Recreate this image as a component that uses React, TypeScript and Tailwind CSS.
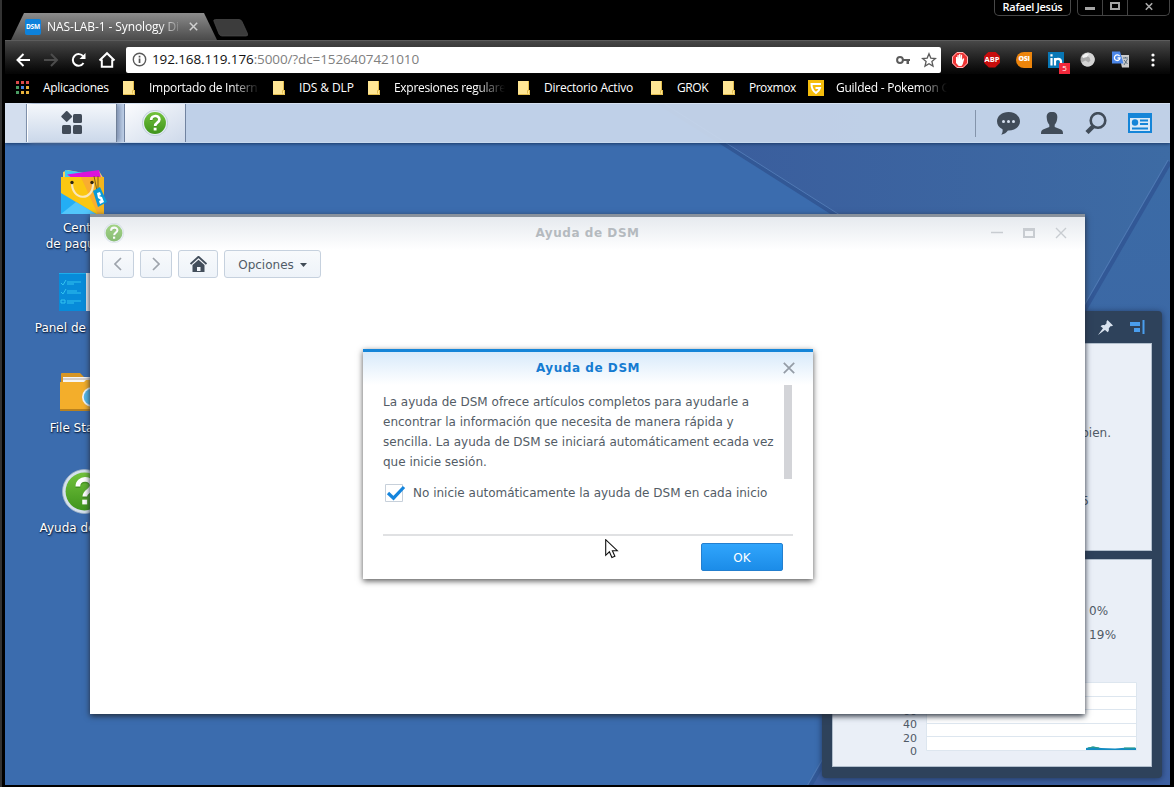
import React from 'react';

const dsm = "font-['DejaVu_Sans',sans-serif]";
const chrome = "font-['Open_Sans','Noto_Sans',sans-serif]";

function HelpBadge({ size, ring = '#e4ecf4', faded = false }: { size: number; ring?: string; faded?: boolean }) {
  const id = `help-${size}`;
  return (
    <svg width={size} height={size} viewBox="0 0 44 44" opacity={faded ? 0.6 : 1} className="block shrink-0">
      <defs>
        <linearGradient id={id} x1="0" y1="0" x2="0" y2="1">
          <stop offset="0" stopColor="#72c23c" />
          <stop offset="1" stopColor="#3f941c" />
        </linearGradient>
      </defs>
      <circle cx="22" cy="22" r="21.5" fill={ring} stroke="#9fb2c4" strokeWidth="0.8" />
      <circle cx="22" cy="22" r="18.5" fill={`url(#${id})`} />
      <path d="M15.500 17.500c0-9 14-9 14-.8 0 5.300-7.200 5-7.200 10.800" fill="none" stroke="#2f7615" strokeWidth="4.600" opacity="0.5" transform="translate(0 1)" />
      <path d="M15.500 17c0-9 14-9 14-.8 0 5.300-7.200 5-7.200 10.800" fill="none" stroke="#fff" strokeWidth="4.600" />
      <rect x="19.800" y="30" width="4.800" height="4.600" fill="#fff" />
    </svg>
  );
}

function Folder() {
  return (
    <svg width="12" height="14" viewBox="0 0 12 14" className="shrink-0">
      <path d="M0 0h11v9h1v5H0z" fill="#ffe694" />
      <path d="M10.500 0v9.500h-1v3M11.500 9v4.500H0" fill="none" stroke="#e3bd4d" strokeWidth="1" />
    </svg>
  );
}

type BM = { label: string; box: string; text: string; fade?: boolean; g?: boolean };
const bookmarks: BM[] = [
  { label: 'Importado de Intern', box: 'w-[150px]', text: 'w-[118px] tracking-[-0.28px]', fade: true },
  { label: 'IDS & DLP', box: 'w-[95px]', text: 'w-[66px] tracking-[-0.1px]' },
  { label: 'Expresiones regulare', box: 'w-[150px]', text: 'w-[118px] tracking-[-0.3px]', fade: true },
  { label: 'Directorio Activo', box: 'w-[133px]', text: 'w-[100px] tracking-[-0.22px]' },
  { label: 'GROK', box: 'w-[72px]', text: 'w-[42px] tracking-[-0.4px]' },
  { label: 'Proxmox', box: 'w-[85px]', text: 'w-[56px] tracking-[-0.5px]' },
  { label: 'Guilded - Pokemon G', box: 'w-[160px]', text: 'w-[130px] tracking-[-0.25px]', fade: true, g: true },
];

function Browser() {
  return (
    <header className={`${chrome} flex h-[103px] flex-col bg-black text-white`}>
      <div className="flex h-[40px] items-end justify-between">
        <div className="flex items-end">
          <div className="ml-[7px] flex h-[27px] w-[206px] items-center bg-linear-to-b from-[#8c8c8c] to-[#4b4b4b] [clip-path:polygon(13px_0,193px_0,206px_27px,0_27px)]">
            <div className="ml-[14px] flex size-4 items-center justify-center rounded-[2px] bg-[#0d82dc] text-[6.5px] font-bold tracking-[-0.1px]">DSM</div>
            <div className="ml-[6px] w-[138px] overflow-hidden text-[12px] tracking-[-0.1px] whitespace-nowrap [mask-image:linear-gradient(to_right,black_112px,transparent_136px)]">NAS-LAB-1 - Synology Di</div>
            <svg width="9" height="9" viewBox="0 0 9 9" className="ml-[4px]"><path d="M.8.800l7.400 7.400M8.200.800L.8 8.200" stroke="#d0d0d0" strokeWidth="1.500" /></svg>
          </div>
          <svg width="36" height="18" viewBox="0 0 36 18" className="mb-[3px] ml-[-4px]"><path d="M1 2.500Q0 .5 2.500.500H26q2 0 3 2l5.500 12q.8 2.500-1.500 2.500H9q-2 0-3-2z" fill="#3c3c3c" stroke="#4a4a4a" strokeWidth=".7" /></svg>
        </div>
        <div className="mr-[4px] flex gap-[6px] self-start">
          <div className="flex h-[16px] w-[77px] items-center justify-center rounded-b-[5px] border border-t-0 border-[#484848] pb-px text-[11px] font-semibold tracking-[-0.3px] whitespace-nowrap">Rafael Jesús</div>
          <div className="flex h-[16px] w-[93px] rounded-b-[5px] border border-t-0 border-[#444] text-[#bbb]">
            <div className="flex w-[25px] items-end justify-center border-r border-[#444] pb-[5px]"><div className="h-[3px] w-[10px] bg-[#a5a5a5]" /></div>
            <div className="flex w-[25px] justify-center border-r border-[#444] pt-[2px]"><div className="h-[8px] w-[10px] border-2 border-[#a5a5a5]" /></div>
            <div className="flex flex-1 justify-center pt-[2px]"><svg width="8" height="9" viewBox="0 0 10 9"><path d="M1 .5l8 8M9 .5l-8 8" stroke="#aaa" strokeWidth="2" /></svg></div>
          </div>
        </div>
      </div>
      <div className="mr-[4px] ml-px flex h-[34px] items-center border-t border-[#5c5c5c] bg-linear-to-b from-[#484848] to-[#050505] pt-[4px] pl-[10px]">
        <svg width="106" height="18" viewBox="0 0 106 18" fill="none" stroke="#fff" strokeWidth="2" className="mr-[5px] shrink-0">
          <path d="M15 9H2.500M8.500 3L2.500 9l6 6" />
          <path d="M29 9h12.500M36 3l6 6-6 6" stroke="#4c4c4c" />
          <path d="M68.500 12a5.800 5.800 0 1 1-.2-6.500" />
          <path d="M70.500 2v6h-6z" fill="#fff" stroke="none" />
          <path d="M84.500 9.500L92 2.200l7.500 7.300M86.800 8.500v7.200h10.400V8.500" />
        </svg>
        <div className="flex h-[26px] w-[815px] shrink-0 items-center rounded-[2px] bg-white pl-[6px] text-[#808080]">
          <svg width="15" height="15" viewBox="0 0 15 15" className="mr-[5px]"><circle cx="7.500" cy="7.500" r="6.200" fill="none" stroke="#5a5a5a" strokeWidth="1.400" /><path d="M6.700 6.500h1.700V11H6.700zM6.700 3.800h1.700v1.600H6.700z" fill="#555" /></svg>
          <div className="w-[738px] pb-px text-[13.5px] tracking-[-0.11px]"><span className="text-[#111]">192.168.119.176</span>:5000/?dc=1526407421010</div>
          <svg width="14" height="10" viewBox="0 0 14 10" className="mr-[11px] ml-[6px]"><circle cx="4" cy="5" r="2.900" fill="none" stroke="#5b5b5b" strokeWidth="2" /><path d="M7 4h7v2h-1v3h-2.500V6H7z" fill="#5b5b5b" /></svg>
          <svg width="16" height="16" viewBox="0 0 16 16"><path d="M8 1.800l1.800 4.300 4.600.4-3.500 3 1.100 4.600L8 11.700l-4 2.400 1.100-4.600-3.500-3 4.600-.4z" fill="none" stroke="#5b5b5b" strokeWidth="1.300" /></svg>
        </div>
        <div className="flex items-center">
          <svg width="16" height="16" viewBox="0 0 16 16" className="ml-[11px]"><path d="M4.800 0h6.400L16 4.800v6.400L11.200 16H4.800L0 11.200V4.800z" fill="#e33" /><path d="M5 .5h6l4.500 4.500v6L11 15.500H5L.5 11V5z" fill="none" stroke="#fbb" /><path d="M4 8V5h1.200v2.200L5.500 3h1.200v4L7.200 2h1.200v5l.6-4.300h1.100V8l1-1.800 1.200.5-1.600 5.500L9.500 14H6.700L4 11z" fill="#fff" /></svg>
          <div className="ml-[16px] flex size-4 items-center justify-center bg-[#c70d0d] text-[7.5px] font-bold [clip-path:polygon(30%_0,70%_0,100%_30%,100%_70%,70%_100%,30%_100%,0_70%,0_30%)]">ABP</div>
          <div className="ml-[16px] flex size-4 items-center justify-center rounded-l-full rounded-tr-[5px] rounded-br-[2px] bg-[#ed850b] text-[7px] font-extrabold tracking-[-0.3px]">OSI</div>
          <div className="relative ml-[16px] size-4 bg-[#0877b5]">
            <svg width="16" height="16" viewBox="0 0 16 16" fill="none" stroke="#fff" strokeWidth="2.200"><path d="M3.500 6v7.500M3.500 2.200v2.300M7 6v7.500M7 9q.5-2.200 3-2.200 3 0 3 3v3.700" /></svg>
            <div className="absolute top-[11px] left-[11px] flex h-[11px] w-[11px] items-center justify-center bg-[#f1283b] text-[8px] font-normal">5</div>
          </div>
          <svg width="15" height="15" viewBox="0 0 15 15" className="ml-[16px]"><circle cx="7.500" cy="7.500" r="7" fill="#aaa" /><path d="M7.500.500a7 7 0 1 1-6 10l4-2 3 2 2-2-1-3-3-2z" fill="#d4d4d4" /><path d="M2 4l4-3 3 1-2 3-4 1z" fill="#f2f2f2" /></svg>
          <svg width="17" height="17" viewBox="0 0 17 17" className="ml-[17px]"><path d="M7 4h10v12.500H10z" fill="#ccc" /><path d="M11 7h5M13.500 6v1M12 14l3.500-6M12 9l3.500 4" stroke="#5c7080" /><path d="M0 .5h8l3.500 12H0z" fill="#4b86e8" /><path d="M7.600 5.200A2.800 2.800 0 1 0 8 7H5.500" fill="none" stroke="#fff" strokeWidth="1.300" /></svg>
          <svg width="4" height="14" viewBox="0 0 4 14" fill="#fff" className="ml-[22px]"><circle cx="2" cy="2" r="1.600" /><circle cx="2" cy="7" r="1.600" /><circle cx="2" cy="12" r="1.600" /></svg>
        </div>
      </div>
      <nav className="flex h-[29px] items-center pb-px pl-[12px] text-[12px] whitespace-nowrap">
        <svg width="14" height="14" viewBox="0 0 14 14"><path d="M0 0h3v3H0zM5 0h3v3H5zM10 0h3v3h-3z" fill="#db4a4a" /><path d="M0 5h3v3H0zM0 10h3v3H0z" fill="#4a9d63" /><path d="M5 5h3v3H5z" fill="#4a82e0" /><path d="M10 5h3v3h-3zM5 10h3v3H5zM10 10h3v3h-3z" fill="#e8b23c" /></svg>
        <div className="ml-[13px] w-[80px] tracking-[-0.3px]">Aplicaciones</div>
        {bookmarks.map((b) => (
          <div key={b.label} className={`flex shrink-0 items-center ${b.box}`}>
            {b.g ? (
              <svg width="16" height="16" viewBox="0 0 16 16" className="mr-[12px] shrink-0"><path d="M0 0h16v16H0z" fill="#f5bd0c" /><path d="M13 4H3.500c0 5 1.500 7 4.500 9 2.500-1.600 3.500-3 4-5H7.500" fill="none" stroke="#fff" strokeWidth="2" /></svg>
            ) : (
              <div className="mr-[14px] shrink-0"><Folder /></div>
            )}
            <div className={`shrink-0 ${b.text} ${b.fade ? '[mask-image:linear-gradient(to_right,black_82px,transparent_111px)]' : ''}`}>{b.label}</div>
          </div>
        ))}
      </nav>
    </header>
  );
}

function Wallpaper() {
  return (
    <svg width="1165" height="683" viewBox="5 103 1165 683" className="absolute inset-0">
      <defs>
        <linearGradient id="wa" x1="0" y1="0" x2="1" y2="0"><stop offset="0" stopColor="#3a5c9c" /><stop offset="1" stopColor="#3d6ba4" /></linearGradient>
        <linearGradient id="wb" x1="0" y1="0" x2="0" y2="1"><stop offset="0" stopColor="#3b6ba6" /><stop offset="1" stopColor="#3d60a1" /></linearGradient>
      </defs>
      <path d="M5 103h1165v683H5z" fill="#3b6cae" />
      <path d="M661 103h509v58L1085 308 837 214z" fill="url(#wa)" />
      <path d="M1170 160L809 786h361z" fill="url(#wb)" />
      <path d="M659 103L839 217M1170 162L809 788" stroke="#325896" strokeWidth="4" />
      <path d="M663 103L843 217M1168 160L807 786" stroke="#5079b4" strokeWidth="1" />
    </svg>
  );
}

function Taskbar() {
  return (
    <div className="relative flex h-[40px] border-y border-t-[#d4e0f0] border-b-[#c9daee] bg-[#cbd9ed]/92 shadow-[0_1px_3px_#1c3a68]">
      <div className="w-[22px] border-r border-[#7f91aa] bg-[#d3deee]" />
      <div className="flex w-[90px] items-center justify-center border-r border-l border-r-[#6f7f97] border-l-white bg-linear-to-b from-[#f4f7fb] to-[#cbd8ea] pr-[2px] shadow-[3px_0_5px_#7d8fae]">
        <svg width="24" height="24" viewBox="0 0 24 24" fill="#414b58"><rect x="3" y="1" width="8.200" height="8.200" rx="1" transform="rotate(45 7 6)" /><rect x="14" y="3" width="9" height="9" rx="1.500" /><rect x="3" y="14" width="9" height="9" rx="1.500" /><rect x="14" y="14" width="9" height="9" rx="1.500" /></svg>
      </div>
      <div className="ml-[7px] flex w-[62px] items-center justify-center border-r border-l border-[#7183a0] bg-linear-to-br from-[#fbfcfe] to-[#ced9ea]"><HelpBadge size={26} /></div>
      <div className="ml-auto flex items-center pr-[18px]">
        <div className="mr-[21px] h-[27px] w-px bg-[#8494ab]" />
        <svg width="23" height="23" viewBox="0 0 23 23"><path d="M11.500 0C5 0 0 4.100 0 9.300c0 3.500 2 6.400 5.500 8 .4 2-.2 4-1.200 5.500 3.300-.5 5-2.300 6.600-4.200C17.700 18.900 23 14.900 23 9.300 23 4.100 18 0 11.500 0z" fill="#414c59" /><circle cx="6.500" cy="9.500" r="1.500" fill="#d6e0ef" /><circle cx="11.500" cy="9.500" r="1.500" fill="#d6e0ef" /><circle cx="16.500" cy="9.500" r="1.500" fill="#d6e0ef" /></svg>
        <svg width="22" height="22" viewBox="0 0 22 22" className="ml-[21px]"><path d="M11 0c4 0 5.500 2 5.300 5.500-.2 3.500-1.300 6-2.600 7.300v2.200l6.300 2.600c1.500.7 2 2 2 4.400H0c0-2.400.5-3.700 2-4.400L8.300 15v-2.200C7 11.500 5.900 9 5.700 5.500 5.500 2 7 0 11 0z" fill="#414c59" /></svg>
        <svg width="22" height="22" viewBox="0 0 22 22" className="ml-[22px]" fill="none" stroke="#414c59"><circle cx="13" cy="8.500" r="7.300" strokeWidth="2.600" /><path d="M8 14.500L2 20.500" strokeWidth="4.500" /></svg>
        <svg width="24" height="20" viewBox="0 0 24 20" className="ml-[21px]"><path d="M0 0h24v20H0z" fill="#1585d8" /><path d="M2 5h20v13H2z" fill="#dae9f7" /><circle cx="7" cy="9.500" r="3.200" fill="#1585d8" /><path d="M12 7.500h8M12 11h8M4 15.500h16" stroke="#1585d8" strokeWidth="1.800" /></svg>
      </div>
    </div>
  );
}

const lbl = 'text-[12px] leading-[16px] text-center text-white whitespace-nowrap [text-shadow:1px_1px_2px_#11294d,0_1px_1px_#11294d]';

function DesktopIcons() {
  return (
    <div className={`${dsm} absolute top-[65px] left-[18px] flex w-[120px] flex-col items-center`}>
      <div className="flex h-[104px] flex-col items-center">
        <svg width="48" height="46" viewBox="0 0 48 46" className="mt-px ml-[3px]">
          <path d="M3 3l5-2 20 4 11-3 5 8H3z" fill="#f0cf62" /><path d="M5 1l20 3-6 5H5z" fill="#3ecbf5" /><path d="M7 5.500L39 1l2 8H12z" fill="#dc12dc" />
          <path d="M1 8h43v37H1z" fill="#f4b51d" /><path d="M1 8h20l17 37H1z" fill="#fbc711" /><path d="M21 8h10l10 37h-3z" fill="#f9ad30" /><path d="M1 24l35 21H1z" fill="#23aef5" /><path d="M16 33l20 12H1z" fill="#52c6fb" />
          <path d="M12 13c-1 19 22 20 21 1" fill="none" stroke="#f9e7ba" strokeWidth="2.200" /><circle cx="12" cy="13.500" r="1.700" fill="#2c2415" /><circle cx="32" cy="13.500" r="1.700" fill="#2c2415" />
          <path d="M34 7l3 15M38 7v14" stroke="#7c601b" strokeWidth="1" /><path d="M33 22l7-4 7 15-9 5z" fill="#079ad9" /><path d="M37 24l3-1 1 3-2 1 3 1 2 5-4 2-1-3 2-1-3-2z" fill="#fff" />
        </svg>
        <div className={`${lbl} mt-[5px]`}>Centro<br />de paquetes</div>
      </div>
      <div className="flex h-[100px] flex-col items-center">
        <svg width="50" height="40" viewBox="0 0 50 40" className="ml-[1px]"><path d="M1 1h27v38H1z" fill="#078bd9" /><path d="M28 1h21v38H28z" fill="#e2e5eb" /><path d="M1 1h27v1H1z" fill="#1dadea" /><path d="M3 11l2 2 3-5M9 10h14M9 12h7M3 20l2 2 3-5M9 19h10M9 21h14M3 28h4v3H3zM9 29h14M9 31h7" fill="none" stroke="#32c3ef" /></svg>
        <div className={`${lbl} mt-[8px]`}>Panel de control</div>
      </div>
      <div className="flex h-[100px] flex-col items-center">
        <svg width="50" height="40" viewBox="0 0 50 40" className="ml-[1px]"><path d="M2 2q0-1 1-1h18l4 4h23v10H2z" fill="#d59525" /><path d="M4 5h44v8H4z" fill="#f5f5f5" /><path d="M4 7h44" stroke="#b7aaa0" /><path d="M1 10h24l2-2h22v30H1z" fill="#f3ae2b" /><path d="M1 37h48v2H1z" fill="#b8811f" /><circle cx="33" cy="25" r="10" fill="#f3f6f9" /><circle cx="33" cy="25" r="8.300" fill="#54b7e8" /></svg>
        <div className={`${lbl} mt-[8px]`}>File Station</div>
      </div>
      <div className="-mt-[3px] flex flex-col items-center">
        <div className="ml-[3px]"><HelpBadge size={45} ring="#d5e0ed" /></div>
        <div className={`${lbl} mt-[6px]`}>Ayuda de DSM</div>
      </div>
    </div>
  );
}

function Widgets() {
  return (
    <aside className={`${dsm} absolute top-[208px] left-[817px] flex h-[467px] w-[340px] flex-col rounded-[4px] bg-[#2e425b] px-[10px] pb-[10px] text-[12px] text-[#505a66] shadow-[0_1px_6px_#20365c]`}>
      <div className="flex h-[32px] items-center justify-end gap-[17px] pr-[7px]">
        <svg width="15" height="15" viewBox="0 0 15 15"><path d="M9.500 0L15 5.500l-1.200.7-1-.2-2 2.300c.4 2-.1 3.200-1.100 4L2.600 6.200c1-1 2.300-1.300 4-1l2-2-.2-1.500zM5.500 7.500l2 2L0 15z" fill="#d9e3ef" /></svg>
        <svg width="15" height="14" viewBox="0 0 15 14" fill="#4a9eee"><path d="M0 2h10v4H0zM4 8h6v4H4zM12.500 0h2v14h-2z" /></svg>
      </div>
      <section className="flex h-[208px] flex-col items-end border border-[#b2bfcd] bg-[#eaeff7]">
        <div className="mt-[80px] mr-[40px] leading-[18px]">Su NAS funciona bien.</div>
        <div className="mt-[50px] mr-[62px] leading-[18px]">00:11:32:25</div>
      </section>
      <section className="mt-[8px] flex h-[208px] flex-col border border-[#b2bfcd] bg-[#eaeff7]">
        <div className="mt-[39px] ml-[256px] leading-[24px] tracking-[0.2px]"><div>0%</div><div>19%</div></div>
        <div className="mt-[35px] flex">
          <div className="flex w-[84px] flex-col pt-[9px] text-right text-[11px] leading-[13.500px]"><span>80</span><span>60</span><span>40</span><span>20</span><span>0</span></div>
          <svg width="212" height="69" viewBox="0 0 212 69" className="ml-[9px]"><path d="M.5.500h210v68H.5z" fill="#fff" stroke="#dde6ef" /><path d="M0 14.500h210M0 27.500h210M0 41.500h210M0 54.500h210" stroke="#dde6ef" /><path d="M160 66l7-1.500 8 1.500 14 .5 10-.7h11V68h-50z" fill="#138bc2" /><path d="M162 66l5-1 6 1M198 66h11" fill="none" stroke="#2f9f83" /></svg>
        </div>
      </section>
    </aside>
  );
}

const tb = 'flex h-[28px] items-center justify-center rounded-[3px] border border-[#c6d1de] bg-linear-to-b from-[#f8fafc] to-[#eef3f9]';

function HelpWindow() {
  return (
    <div className={`${dsm} absolute top-[111px] left-[85px] flex h-[500px] w-[995px] flex-col border-t-[3px] border-[#88919c] bg-white shadow-[0_2px_6px_#222b38]`}>
      <div className="grid h-[33px] shrink-0 grid-cols-[1fr_auto_1fr] items-center bg-linear-to-b from-[#e6eaef] to-white pb-px">
        <div className="pl-[14px]"><HelpBadge size={20} faded /></div>
        <div className="text-[12px] font-bold tracking-[0.55px] text-[#b5babf]">Ayuda de DSM</div>
        <svg width="78" height="12" viewBox="0 0 78 12" className="mr-[17px] justify-self-end" fill="none" stroke="#c8ccd1"><path d="M1 5.500h12" strokeWidth="1.500" /><path d="M33 2.500h12" strokeWidth="3" /><path d="M34 1v10M44 1v10M33 10h12" strokeWidth="2" /><path d="M66 1l10 10M76 1L66 11" strokeWidth="1.400" /></svg>
      </div>
      <div className="flex gap-[6px] pl-[12px]">
        <div className={`${tb} w-[32px]`}><svg width="8" height="14" viewBox="0 0 8 14"><path d="M7 1L1 7l6 6" fill="none" stroke="#9ea4ac" strokeWidth="1.700" /></svg></div>
        <div className={`${tb} w-[32px]`}><svg width="8" height="14" viewBox="0 0 8 14"><path d="M1 1l6 6-6 6" fill="none" stroke="#9ea4ac" strokeWidth="1.700" /></svg></div>
        <div className={`${tb} w-[40px]`}><svg width="17" height="16" viewBox="0 0 17 16"><path d="M.5 8L8.500.800l8 7.200" fill="none" stroke="#434e5b" strokeWidth="1.900" /><path d="M2.500 9L8.500 3.800l6 5.200v7h-12z" fill="#434e5b" /><path d="M7 11h3.500v4H7z" fill="#f3f6fa" /></svg></div>
        <div className={`${tb} w-[97px] gap-[6px] pt-[2px] text-[12px] text-[#515c67]`}><span>Opciones</span><svg width="7" height="4" viewBox="0 0 7 4"><path d="M0 0h7L3.500 4z" fill="#414b56" /></svg></div>
      </div>
    </div>
  );
}

function Dialog() {
  return (
    <div className={`${dsm} absolute top-[246px] left-[358px] flex h-[230px] w-[450px] flex-col border-t-[3px] border-[#1585d8] bg-white text-[12px] text-[#535c66] shadow-[0_2px_6px_#555]`}>
      <div className="grid h-[33px] shrink-0 grid-cols-[1fr_auto_1fr] items-center bg-linear-to-b from-[#d8eafa] to-white pb-[2px]">
        <span />
        <div className="pt-px font-bold tracking-[0.55px] text-[#157bd1]">Ayuda de DSM</div>
        <svg width="12" height="12" viewBox="0 0 12 12" className="mr-[18px] justify-self-end"><path d="M.8.800l10.400 10.400M11.200.800L.8 11.200" stroke="#949ca6" strokeWidth="1.700" /></svg>
      </div>
      <div className="flex h-[149px] pl-[20px]">
        <div className="w-[401px] pt-[7px] whitespace-nowrap">
          <div className="leading-[20px]">
            <div>La ayuda de DSM ofrece artículos completos para ayudarle a</div>
            <div>encontrar la información que necesita de manera rápida y</div>
            <div>sencilla. La ayuda de DSM se iniciará automáticament ecada vez</div>
            <div>que inicie sesión.</div>
          </div>
          <div className="mt-[12px] flex h-[18px] items-center pl-[2px]">
            <svg width="21" height="18" viewBox="0 0 21 18" className="mr-[7px]"><path d="M.5.500h17v17H.5z" fill="#fff" stroke="#c7d0da" /><path d="M3 9l5.500 5.200L19 3" fill="none" stroke="#1585dd" strokeWidth="3.200" /></svg>
            <span>No inicie automáticamente la ayuda de DSM en cada inicio</span>
          </div>
        </div>
        <div className="h-[94px] w-[8px] bg-[#d3d4d8]" />
      </div>
      <div className="mx-[20px] flex justify-end border-t-2 border-[#e0e1e3] pt-[7px] pr-[10px]">
        <div className="flex h-[28px] w-[82px] items-center justify-center rounded-[2px] border border-[#237fcf] bg-linear-to-b from-[#30a5fc] to-[#1b8ce8] pt-[2px] text-white">OK</div>
      </div>
    </div>
  );
}

export default function App() {
  return (
    <div className="h-[787px] w-[1174px] overflow-hidden border-l-2 border-[#333] bg-black">
      <div className="-ml-[2px] pl-[5px]">
        <div className="-ml-px"><Browser /></div>
        <main className="relative h-[682px] w-[1165px] overflow-hidden">
          <Wallpaper />
          <Taskbar />
          <DesktopIcons />
          <Widgets />
          <HelpWindow />
          <Dialog />
          <svg width="14" height="21" viewBox="0 0 14 21" className="absolute top-[436px] left-[600px]"><path d="M.7.700v15.600l3.700-3.500 2.500 5.700 3-1.300-2.500-5.500h4.900z" fill="#fff" stroke="#111" strokeWidth="1.100" /></svg>
        </main>
      </div>
    </div>
  );
}
